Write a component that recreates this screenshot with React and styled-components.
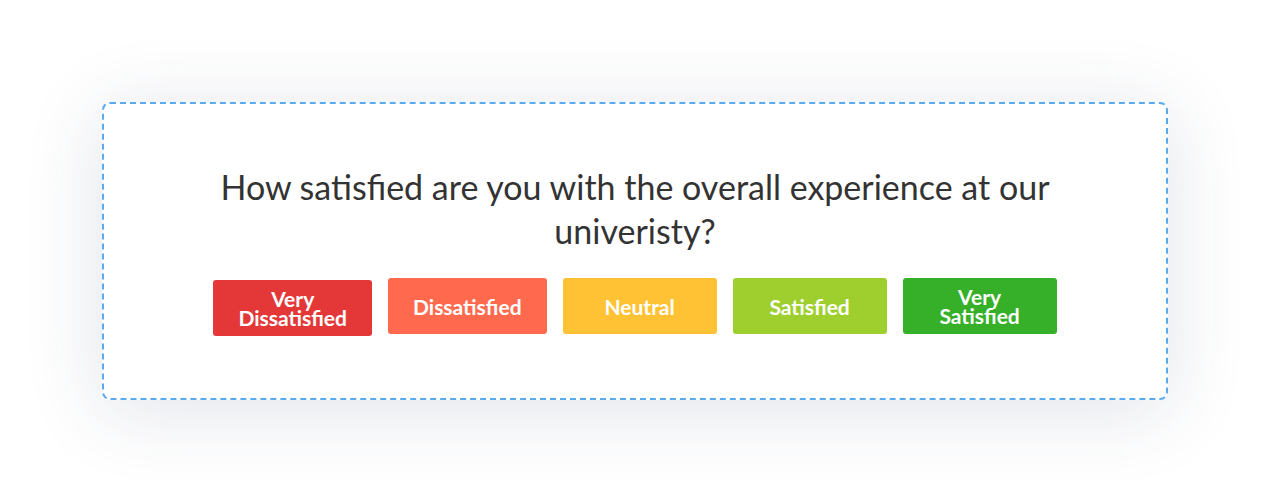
import React from "react";
import styled, { createGlobalStyle } from "styled-components";

const Global = createGlobalStyle`
  html, body { margin: 0; padding: 0; background: #ffffff; }
  body { font-family: "Lato", "Open Sans", sans-serif; }
`;

const Page = styled.div`
  padding: 102px 100px 100px 102px;
  background: #ffffff;
`;

const Card = styled.div`
  box-sizing: border-box;
  width: 1066px;
  height: 298px;
  background: #ffffff;
  border: 2px dashed #5aaaf0;
  border-radius: 8px;
  box-shadow: 0 10px 80px rgba(40, 60, 100, 0.14);
  display: flex;
  flex-direction: column;
  align-items: center;
  padding-top: 61px;
`;

const Question = styled.h1`
  margin: 0;
  max-width: 880px;
  text-align: center;
  font-family: "Lato", sans-serif;
  font-weight: 400;
  font-size: 34px;
  line-height: 44px;
  color: #333333;
`;

const Options = styled.div`
  display: flex;
  gap: 16px;
  margin-top: 25px;
`;

const Option = styled.button`
  box-sizing: border-box;
  min-width: 154px;
  height: 56px;
  padding: 0 25px;
  border: none;
  border-radius: 3px;
  background: ${(p) => p.$bg};
  color: #ffffff;
  font-family: "Lato", sans-serif;
  font-weight: 700;
  font-size: 21px;
  line-height: 19px;
  display: flex;
  align-items: center;
  justify-content: center;
  text-align: center;
  cursor: pointer;
  margin-top: ${(p) => (p.$drop ? "2px" : "0")};
`;

const Label = styled.span`
  display: block;
`;

const options = [
  { label: ["Very", "Dissatisfied"], bg: "#e43838", drop: true },
  { label: ["Dissatisfied"], bg: "#ff6a4e" },
  { label: ["Neutral"], bg: "#ffc234" },
  { label: ["Satisfied"], bg: "#9ecf2f" },
  { label: ["Very", "Satisfied"], bg: "#36af29" },
];

export default function App() {
  return (
    <>
      <Global />
      <Page>
        <Card>
          <Question>
            How satisfied are you with the overall experience at our univeristy?
          </Question>
          <Options>
            {options.map((o, i) => (
              <Option key={i} $bg={o.bg} $drop={o.drop}>
                <Label>
                  {o.label.map((l, j) => (
                    <React.Fragment key={j}>
                      {j > 0 && <br />}
                      {l}
                    </React.Fragment>
                  ))}
                </Label>
              </Option>
            ))}
          </Options>
        </Card>
      </Page>
    </>
  );
}
